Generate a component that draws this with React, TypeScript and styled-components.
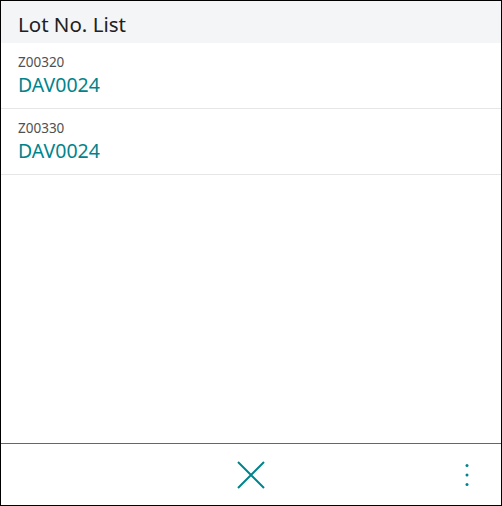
import React from "react";
import styled, { createGlobalStyle } from "styled-components";

const GlobalStyle = createGlobalStyle`
  html, body {
    margin: 0;
    padding: 0;
    background: #fff;
  }
  body {
    font-family: "Noto Sans", "Open Sans", sans-serif;
  }
`;

const Frame = styled.div`
  width: 502px;
  height: 506px;
  box-sizing: border-box;
  border: 1px solid #000;
  display: flex;
  flex-direction: column;
  background: #fff;
`;

const Header = styled.div`
  height: 42px;
  box-sizing: border-box;
  background: #f4f5f7;
  display: flex;
  align-items: center;
  padding: 4px 17px 0;
`;

const Title = styled.h1`
  margin: 0;
  font-size: 20.5px;
  font-weight: 400;
  color: #212121;
`;

const List = styled.div`
  flex: 1;
  display: flex;
  flex-direction: column;
`;

const Row = styled.div`
  height: 66px;
  box-sizing: border-box;
  border-bottom: 1px solid #e6e6e6;
  padding: 10px 17px 0;
  display: flex;
  flex-direction: column;
`;

const SubText = styled.div`
  font-size: 13.5px;
  line-height: 18px;
  color: #505050;
`;

const MainText = styled.div`
  font-size: 19.5px;
  line-height: 28px;
  color: #00848c;
`;

const Footer = styled.div`
  height: 61px;
  border-top: 1px solid #666;
  display: flex;
  align-items: center;
  justify-content: center;
  position: relative;
`;

const IconButton = styled.button`
  border: none;
  background: none;
  padding: 0;
  margin: 0;
  display: flex;
  align-items: center;
  justify-content: center;
  cursor: pointer;
`;

const MoreButton = styled(IconButton)`
  position: absolute;
  right: 31px;
  top: 50%;
  transform: translateY(-50%);
`;

interface ILot {
  code: string;
  lot: string;
}

const lots: ILot[] = [
  { code: "Z00320", lot: "DAV0024" },
  { code: "Z00330", lot: "DAV0024" },
];

const App: React.FC = () => {
  return (
    <Frame>
      <GlobalStyle />
      <Header>
        <Title>Lot No. List</Title>
      </Header>
      <List>
        {lots.map((item) => (
          <Row key={item.code}>
            <SubText>{item.code}</SubText>
            <MainText>{item.lot}</MainText>
          </Row>
        ))}
      </List>
      <Footer>
        <IconButton>
          <svg width="28" height="28" viewBox="0 0 28 28">
            <path
              d="M1 1 L27 27 M27 1 L1 27"
              stroke="#00848c"
              strokeWidth="2"
              fill="none"
            />
          </svg>
        </IconButton>
        <MoreButton>
          <svg width="6" height="24" viewBox="0 0 6 24">
            <circle cx="3" cy="2.5" r="1.5" fill="#00848c" />
            <circle cx="3" cy="12" r="1.5" fill="#00848c" />
            <circle cx="3" cy="21.5" r="1.5" fill="#00848c" />
          </svg>
        </MoreButton>
      </Footer>
    </Frame>
  );
};

export default App;
